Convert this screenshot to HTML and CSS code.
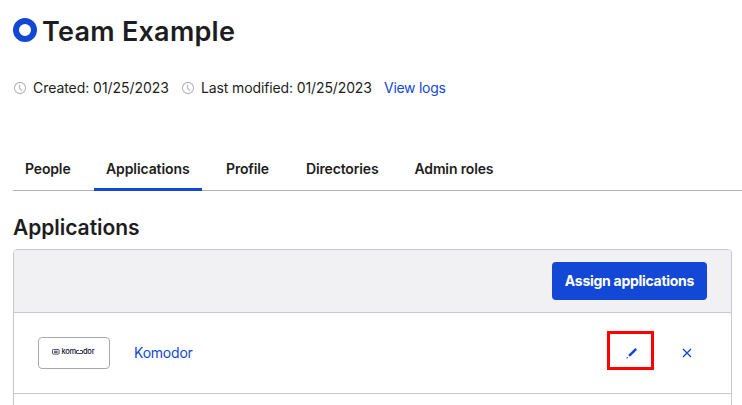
FILE: index.html
```
<!DOCTYPE html>
<html lang="en">
<head>
<meta charset="utf-8">
<title>Team Example</title>
<link rel="stylesheet" href="styles.css">
</head>
<body>
<header class="heading">
  <span class="ring"></span>
  <h1>Team Example</h1>
</header>
<div class="meta">
  <svg class="clock" viewBox="0 0 14 14"><circle cx="7" cy="7" r="5.6"/><path d="M6.6 3.7V7.2L8.8 9.9"/></svg>
  <span class="created">Created: 01/25/2023</span>
  <svg class="clock" viewBox="0 0 14 14"><circle cx="7" cy="7" r="5.6"/><path d="M6.6 3.7V7.2L8.8 9.9"/></svg>
  <span class="modified">Last modified: 01/25/2023</span>
  <a class="logs">View logs</a>
</div>
<nav class="tabs">
  <a class="tab people">People</a>
  <a class="tab apps active">Applications</a>
  <a class="tab profile">Profile</a>
  <a class="tab directories">Directories</a>
  <a class="tab admin">Admin roles</a>
</nav>
<h2>Applications</h2>
<section class="panel">
  <div class="toolbar"><button class="assign">Assign applications</button></div>
  <div class="row">
    <div class="logo">
      <svg class="mark" viewBox="0 0 8 6"><rect x=".5" y=".5" width="6.6" height="4.6" rx=".8"/><path d="M2 2.3h3.6M2 3.4h3.6"/></svg>
      <span class="word">kom</span>
      <svg class="link" viewBox="0 0 7 4"><path d="M3 .5H1Q.5.5.5 1V3Q.5 3.5 1 3.5H6Q6.5 3.5 6.5 3V1Q6.5.5 6 .5H4"/></svg>
      <span class="word">dor</span>
    </div>
    <a class="name">Komodor</a>
    <button class="edit"><svg viewBox="0 0 12 12"><path d="M3.1 8.9 10.2 1.8" stroke-width="2.5"/><path d="M.2 11.4 1 9.7 2.3 11Z" class="tip"/></svg></button>
    <button class="remove"><svg viewBox="0 0 10 10"><path d="M1 1 9 9M9 1 1 9"/></svg></button>
  </div>
</section>
</body>
</html>
```
FILE: styles.css
```
* { box-sizing: border-box; }
body {
  margin: 0;
  height: 405px;
  padding-left: 13px;
  overflow: hidden;
  background: #fff;
  color: #1d1d21;
  font-family: Inter, "Liberation Sans", sans-serif;
  font-size: 14px;
  white-space: nowrap;
}
.heading { display: flex; align-items: center; height: 62px; }
.ring {
  width: 24px;
  height: 24px;
  margin: -2px 5px 0 0;
  border: 6px solid #1347d6;
  border-radius: 50%;
}
h1, h2 { margin: 0; font-weight: 600; }
h1 { padding-top: 2px; font-size: 27px; line-height: 40px; letter-spacing: .27px; }
.meta { display: flex; align-items: center; height: 20px; margin-top: 16px; line-height: 20px; }
.clock { width: 14px; height: 14px; margin-right: 6px; fill: none; stroke: #b4b4bd; stroke-width: 1.1; }
.created { width: 148px; letter-spacing: -.05px; }
.modified { width: 183px; letter-spacing: -.12px; }
.logs { letter-spacing: -.28px; }
a { color: #1347d6; }
.tabs { display: flex; gap: 12px; height: 43px; margin-top: 50px; border-bottom: 1px solid #b0b0b9; }
.tab { height: 43px; padding: 0 12px; line-height: 42px; color: #1d1d21; font-weight: 600; letter-spacing: -.15px; }
.active { border-bottom: 3px solid #1347d6; }
.people { width: 69px; }
.apps { width: 108px; letter-spacing: -.1px; }
.profile { width: 68px; }
.directories { width: 96.5px; }
h2 { height: 58px; padding-top: 22px; font-size: 21px; line-height: 30px; letter-spacing: -.05px; }
.panel { width: 719px; height: 170px; border: 1px solid #c8c8ce; border-radius: 4px 4px 0 0; overflow: hidden; }
.toolbar { display: flex; justify-content: flex-end; height: 63px; padding: 12px 24px; background: #f1f1f4; border-bottom: 1px solid #c8c8ce; }
button { padding: 0; border: 0; background: none; font: inherit; }
.assign { width: 155px; height: 38px; padding-bottom: 1px; border-radius: 4px; background: #1347d6; color: #fff; font-weight: 700; letter-spacing: -.28px; }
.row { display: flex; align-items: center; height: 81px; padding-left: 24px; border-bottom: 1px solid #c8c8ce; }
.logo { display: flex; align-items: center; width: 72px; height: 32px; padding: 0 0 2px 13px; border: 1px solid #a9a9b3; border-radius: 4px; }
.mark { flex: none; width: 8px; height: 6px; margin-right: 1.5px; fill: none; stroke: #25253f; stroke-width: .8; }
.word { color: #15152f; font-size: 7.5px; line-height: 8px; font-weight: 500; letter-spacing: -.25px; }
.link { flex: none; width: 7px; height: 4px; margin: 0; fill: none; stroke: #15152f; stroke-width: .8; }
.name { width: 473px; margin-left: 24px; padding-bottom: 1px; letter-spacing: -.22px; }
.edit { display: flex; align-items: center; justify-content: center; width: 47px; height: 39px; margin-top: -5px; border: 3px solid #f00; }
.edit svg { width: 12px; height: 12px; margin: 4px 0 0 2px; fill: none; stroke: #1347d6; }
.edit .tip { fill: #1347d6; stroke: none; }
.remove { display: flex; margin-left: 28px; }
.remove svg { width: 10px; height: 10px; fill: none; stroke: #1347d6; stroke-width: 1.3; }
```
